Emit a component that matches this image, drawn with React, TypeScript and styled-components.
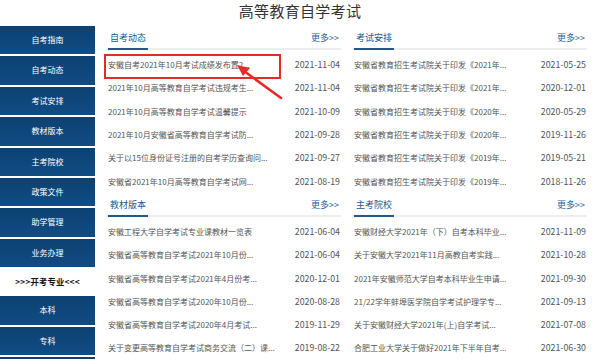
import React from "react";
import styled, { createGlobalStyle } from "styled-components";

type Item = { title: string; date: string };
type Section = { name: string; items: Item[] };

const menu = ["自考指南", "自考动态", "考试安排", "教材版本", "主考院校", "政策文件", "助学管理", "业务办理"];
const majors = ["本科", "专科", "专升本"];

const sections: Section[] = [
  {
    name: "自考动态",
    items: [
      { title: "安徽自考2021年10月考试成绩发布置2...", date: "2021-11-04" },
      { title: "2021年10月高等教育自学考试违规考生...", date: "2021-11-04" },
      { title: "2021年10月高等教育自学考试温馨提示", date: "2021-10-09" },
      { title: "2021年10月安徽省高等教育自学考试防...", date: "2021-09-28" },
      { title: "关于以15位身份证号注册的自考学历查询问...", date: "2021-09-27" },
      { title: "安徽省2021年10月高等教育自学考试网...", date: "2021-08-19" },
    ],
  },
  {
    name: "考试安排",
    items: [
      { title: "安徽省教育招生考试院关于印发《2021年...", date: "2021-05-25" },
      { title: "安徽省教育招生考试院关于印发《2021年...", date: "2020-12-01" },
      { title: "安徽省教育招生考试院关于印发《2020年...", date: "2020-05-29" },
      { title: "安徽省教育招生考试院关于印发《2020年...", date: "2019-11-26" },
      { title: "安徽省教育招生考试院关于印发《2019年...", date: "2019-05-21" },
      { title: "安徽省教育招生考试院关于印发《2019年...", date: "2018-11-26" },
    ],
  },
  {
    name: "教材版本",
    items: [
      { title: "安徽工程大学自学考试专业课教材一览表", date: "2021-06-04" },
      { title: "安徽省高等教育自学考试2021年10月份...", date: "2021-06-04" },
      { title: "安徽省高等教育自学考试2021年4月份考...", date: "2020-12-01" },
      { title: "安徽省高等教育自学考试2020年10月份...", date: "2020-08-28" },
      { title: "安徽省高等教育自学考试2020年4月考试...", date: "2019-11-29" },
      { title: "关于变更高等教育自学考试商务交流（二）课...", date: "2019-08-22" },
    ],
  },
  {
    name: "主考院校",
    items: [
      { title: "安徽财经大学2021年（下）自考本科毕业...", date: "2021-11-09" },
      { title: "关于安徽大学2021年11月高教自考实践...", date: "2021-10-28" },
      { title: "2021年安徽师范大学自考本科毕业生申请...", date: "2021-09-30" },
      { title: "21/22学年蚌埠医学院自学考试护理学专...", date: "2021-09-13" },
      { title: "关于安徽财经大学2021年(上)自学考试...", date: "2021-07-08" },
      { title: "合肥工业大学关于做好2021年下半年自考...", date: "2021-06-30" },
    ],
  },
];

const App: React.FC = () => {
  return (
    <Page>
      <GlobalStyle />
      <Title>高等教育自学考试</Title>
      <Body>
        <Sidebar>
          {menu.map((m) => (
            <NavItem key={m}>{m}</NavItem>
          ))}
          <NavHeading>&gt;&gt;&gt;开考专业&lt;&lt;&lt;</NavHeading>
          {majors.map((m) => (
            <NavItem key={m}>{m}</NavItem>
          ))}
        </Sidebar>
        <Main>
          {sections.map((s) => (
            <Panel key={s.name}>
              <PanelHeader>
                <Tab>{s.name}</Tab>
                <More>更多&gt;&gt;</More>
              </PanelHeader>
              <List>
                {s.items.map((it, i) => (
                  <Row key={i}>
                    <RowTitle>{it.title}</RowTitle>
                    <RowDate>{it.date}</RowDate>
                  </Row>
                ))}
              </List>
            </Panel>
          ))}
        </Main>
      </Body>

      {/* annotation drawn over the first news item */}
      <HighlightBox />
      <Arrow width="60" height="50" viewBox="0 0 60 50">
        <line x1="49" y1="40" x2="12" y2="13" stroke="#e52a2a" strokeWidth="2.6" strokeLinecap="round" />
        <polygon points="5,7 18,10 11,18" fill="#e52a2a" />
      </Arrow>
    </Page>
  );
};

const GlobalStyle = createGlobalStyle`
  html, body {
    margin: 0;
    padding: 0;
    background: #fff;
  }
  body {
    font-family: "Noto Sans CJK SC", "Noto Sans", sans-serif;
  }
`;

const Page = styled.div`
  position: relative;
  width: 600px;
  height: 359px;
  overflow: hidden;
  background: #fff;
`;

const Title = styled.div`
  height: 26px;
  line-height: 21px;
  text-align: center;
  font-size: 15px;
  color: #333;
  letter-spacing: 0.3px;
`;

const Body = styled.div`
  display: flex;
  align-items: flex-start;
`;

const Sidebar = styled.div`
  width: 95px;
  flex-shrink: 0;
  display: flex;
  flex-direction: column;
`;

const NavItem = styled.div`
  height: 28.4px;
  line-height: 28.4px;
  margin-bottom: 2px;
  background: linear-gradient(#0d4172, #104c84);
  color: #fff;
  font-size: 8px;
  text-align: center;
`;

const NavHeading = styled.div`
  height: 27px;
  line-height: 25px;
  text-align: center;
  font-size: 8.3px;
  font-weight: bold;
  color: #111;
  letter-spacing: 0.2px;
`;

const Main = styled.div`
  flex: 1;
  padding: 0 13px 0 11px;
  display: grid;
  grid-template-columns: 1fr 1fr;
  align-content: start;
  column-gap: 11px;
`;

const Panel = styled.div`
  display: flex;
  flex-direction: column;
  min-width: 0;
`;

const PanelHeader = styled.div`
  height: 22px;
  display: flex;
  justify-content: space-between;
  align-items: flex-end;
  border-bottom: 2px solid #eeeeee;
`;

const Tab = styled.div`
  height: 22px;
  line-height: 24px;
  padding: 0 2px;
  margin-left: 2px;
  margin-bottom: -2px;
  border-bottom: 2px solid #23578c;
  color: #23578c;
  font-size: 9px;
`;

const More = styled.div`
  line-height: 24px;
  height: 22px;
  color: #2c5f98;
  font-size: 9px;
  margin-right: 2px;
`;

const List = styled.div`
  padding-top: 3px;
`;

const Row = styled.div`
  height: 23.3px;
  display: flex;
  align-items: center;
  justify-content: space-between;
  padding: 0 1px 0 2px;
  color: #555;
  font-size: 8px;
`;

const RowTitle = styled.span`
  white-space: nowrap;
  overflow: hidden;
  max-width: 185px;
`;

const RowDate = styled.span`
  white-space: nowrap;
  font-size: 8.8px;
  color: #555;
`;

const HighlightBox = styled.div`
  position: absolute;
  left: 104px;
  top: 54px;
  width: 173px;
  height: 21px;
  border: 2px solid #e52a2a;
`;

const Arrow = styled.svg`
  position: absolute;
  left: 232px;
  top: 58px;
`;

export default App;
